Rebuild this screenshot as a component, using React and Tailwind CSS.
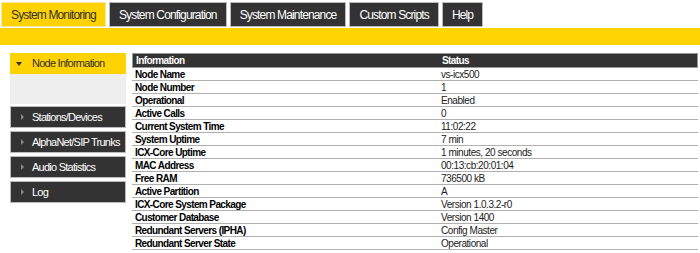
import React from "react";

const tabs = ["System Monitoring", "System Configuration", "System Maintenance", "Custom Scripts", "Help"];

const menu = ["Stations/Devices", "AlphaNet/SIP Trunks", "Audio Statistics", "Log"];

const rows = [
  ["Node Name", "vs-icx500"],
  ["Node Number", "1"],
  ["Operational", "Enabled"],
  ["Active Calls", "0"],
  ["Current System Time", "11:02:22"],
  ["System Uptime", "7 min"],
  ["ICX-Core Uptime", "1 minutes, 20 seconds"],
  ["MAC Address", "00:13:cb:20:01:04"],
  ["Free RAM", "736500 kB"],
  ["Active Partition", "A"],
  ["ICX-Core System Package", "Version 1.0.3.2-r0"],
  ["Customer Database", "Version 1400"],
  ["Redundant Servers (IPHA)", "Config Master"],
  ["Redundant Server State", "Operational"],
];

export default function App() {
  return (
    <div className="w-[700px] h-[253px] bg-white font-['Liberation_Sans',Arial,sans-serif] overflow-hidden whitespace-nowrap">
      {/* Top tabs */}
      <div className="flex gap-[3px] pl-[1px] pt-[2px] h-[27px]">
        {tabs.map((t, i) => (
          <div
            key={t}
            className={
              i === 0
                ? "px-[9px] h-[25px] flex items-center text-[12px] tracking-[-0.85px] border border-[#f3e7a0] bg-[#ffd200] text-[#333]"
                : "px-[9px] h-[25px] flex items-center text-[12px] tracking-[-0.85px] border border-[#bbb] bg-[#333] text-white"
            }
          >
            {t}
          </div>
        ))}
      </div>
      <div className="h-[17px] mt-[1px] bg-[#ffd400]" />

      <div className="flex pt-[8px] pl-[10px]">
        {/* Sidebar */}
        <div className="w-[116px] shrink-0">
          <div className="h-[21px] bg-[#ffd200] flex items-center text-[11px] tracking-[-0.75px] text-[#333]">
            <span className="w-0 h-0 ml-[6px] mr-[10px] border-l-[3px] border-r-[3px] border-t-[4px] border-l-transparent border-r-transparent border-t-[#333]" />
            Node Information
          </div>
          <div className="h-[30px] bg-[#eeeeee]" />
          <div className="flex flex-col gap-[3px] mt-[2px]">
            {menu.map((m) => (
              <div
                key={m}
                className="h-[22px] bg-[#333] border border-[#bbb] flex items-center text-[11px] tracking-[-0.75px] text-white"
              >
                <span className="w-0 h-0 ml-[10px] mr-[8px] border-t-[3px] border-b-[3px] border-l-[3px] border-t-transparent border-b-transparent border-l-[#888]" />
                {m}
              </div>
            ))}
          </div>
        </div>

        {/* Info table */}
        <div className="ml-[6px] w-[566px]">
          <div className="flex h-[15px] bg-[#333] border border-[#999] text-white text-[10px] tracking-[-0.6px] font-bold items-center">
            <div className="w-[306px] pl-[3px]">Information</div>
            <div className="pl-[3px]">Status</div>
          </div>
          {rows.map(([k, v]) => (
            <div key={k} className="flex h-[13px] border-b border-[#b0b0b0] text-[10px] text-black items-center">
              <div className="w-[307px] pl-[3px] font-bold tracking-[-0.6px]">{k}</div>
              <div className="pl-[2px] text-[#222] tracking-[-0.45px]">{v}</div>
            </div>
          ))}
        </div>
      </div>
    </div>
  );
}
